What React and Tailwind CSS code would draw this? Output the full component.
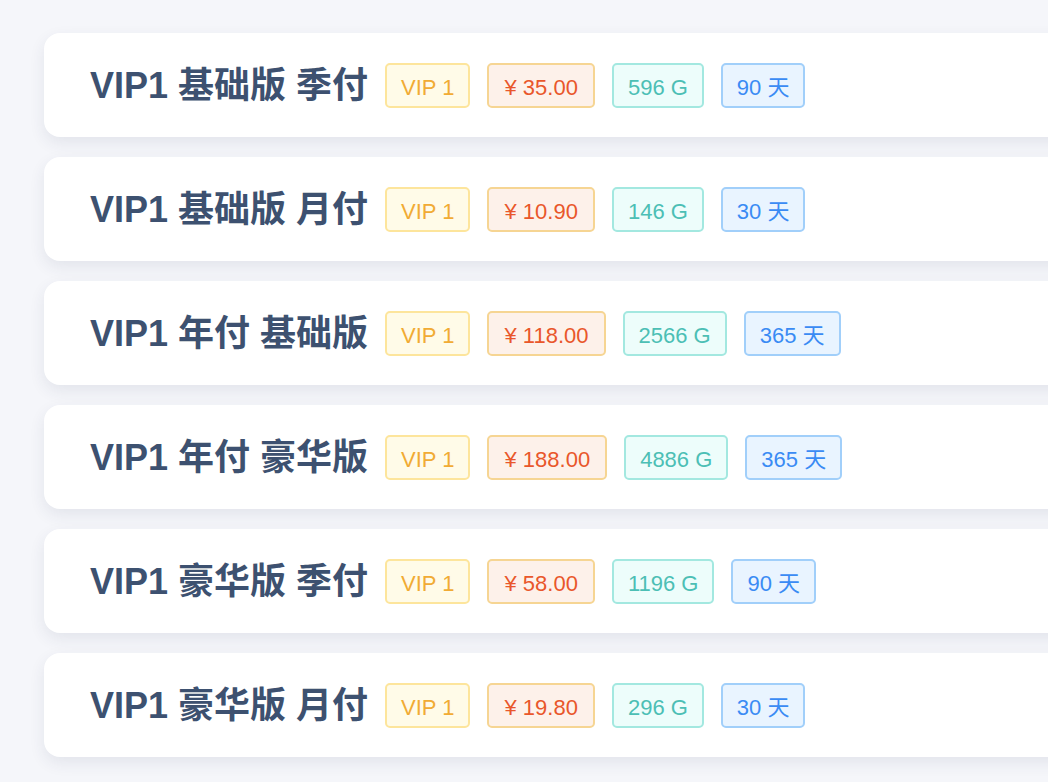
const plans = [
  { name: "VIP1 基础版 季付", level: "VIP 1", price: "35.00", traffic: "596 G", days: "90 天" },
  { name: "VIP1 基础版 月付", level: "VIP 1", price: "10.90", traffic: "146 G", days: "30 天" },
  { name: "VIP1 年付 基础版", level: "VIP 1", price: "118.00", traffic: "2566 G", days: "365 天" },
  { name: "VIP1 年付 豪华版", level: "VIP 1", price: "188.00", traffic: "4886 G", days: "365 天" },
  { name: "VIP1 豪华版 季付", level: "VIP 1", price: "58.00", traffic: "1196 G", days: "90 天" },
  { name: "VIP1 豪华版 月付", level: "VIP 1", price: "19.80", traffic: "296 G", days: "30 天" },
];

function Tag({ className, children }) {
  return (
    <span className={`inline-flex items-center h-[45px] pt-[5px] px-[14px] border-2 rounded-[5px] text-[22px] leading-none whitespace-nowrap ${className}`}>
      {children}
    </span>
  );
}

export default function App() {
  return (
    <div
      className="w-screen h-screen overflow-hidden bg-[#f5f6fa]"
      style={{ fontFamily: '"Liberation Sans", "Noto Sans CJK SC", sans-serif' }}
    >
      <div className="flex flex-col gap-[20px] pt-[33px] pl-[44px]">
        {plans.map((p) => (
          <div
            key={p.name}
            className="w-[1100px] h-[104px] flex items-center gap-[17px] pl-[46px] bg-white rounded-[16px] shadow-[0_6px_16px_rgba(40,50,90,0.09)]"
          >
            <span className="text-[36px] font-bold text-[#3d5170] whitespace-nowrap pt-[2px]">{p.name}</span>
            <Tag className="bg-[#fffbe8] border-[#fde59c] text-[#f1ab34]">{p.level}</Tag>
            <Tag className="bg-[#fdf1ea] border-[#f6d593] text-[#e9572b] px-[15px]">¥ {p.price}</Tag>
            <Tag className="bg-[#edfdfb] border-[#a3e8e0] text-[#4cbfb5]">{p.traffic}</Tag>
            <Tag className="bg-[#e9f4ff] border-[#a1cffa] text-[#3a8bf4]">{p.days}</Tag>
          </div>
        ))}
      </div>
    </div>
  );
}
